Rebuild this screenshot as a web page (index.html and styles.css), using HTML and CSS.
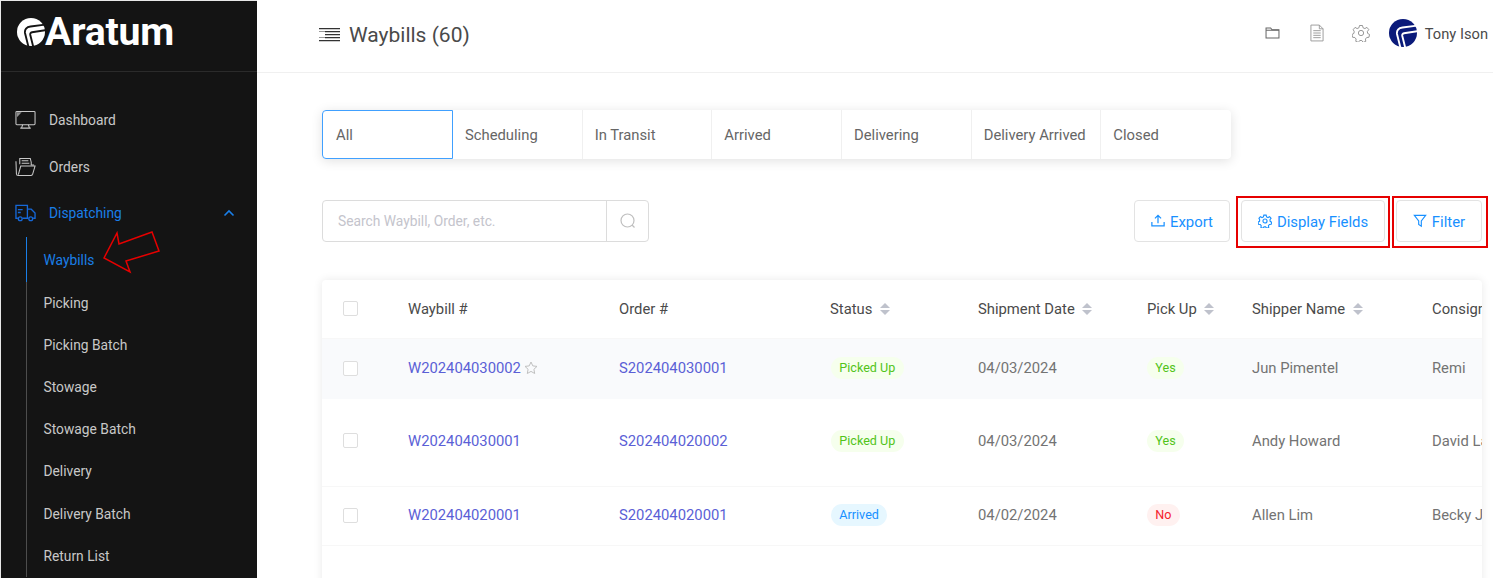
FILE: index.html
```html
<!DOCTYPE html>
<html lang="en">

<head>
    <meta charset="UTF-8">
    <meta name="viewport" content="width=device-width, initial-scale=1.0">
    <link rel="stylesheet" href="styles.css">
    <title>Waybills</title>
</head>

<body>
    <div class="app">
        <aside class="sidebar">
            <div class="brand">
                <svg class="brand-mark" viewBox="0 0 28 28">
                    <circle cx="14" cy="14" r="14" fill="#fff"/>
                    <g fill="none" stroke="#141414" stroke-width="1.900">
                        <path d="M29 6.500L13.500 8.500C9.500 9 7.500 11.500 8 15l3.500 14"/>
                        <path d="M29 12l-14 2.300c-1.500.3-2 1.200-1.700 2.700l3 12"/>
                    </g>
                </svg>
                <span class="brand-name">Aratum</span>
            </div>
            <nav class="nav">
                <a class="nav-item">
                    <svg class="nav-icon" viewBox="0 0 22 20" fill="none" stroke="#c8c8c8" stroke-width="1.100">
                        <rect x="1" y="1" width="20" height="14" rx="1"/>
                        <path d="M8 15l-1 3M14 15l1 3M5.500 18.500h11"/>
                        <path fill="#8c8c8c" stroke="none" d="M2 2h5l-5 5z"/>
                    </svg>
                    <span>Dashboard</span>
                </a>
                <a class="nav-item">
                    <svg class="nav-icon" viewBox="0 0 22 20" fill="none" stroke="#c8c8c8" stroke-width="1.100">
                        <path d="M5 7V1h11l1 4v3h3"/>
                        <path d="M7 3.500h7M7 6h8"/>
                        <path d="M1 4l.5 13c0 1 .7 2 2 2h13c1 0 1.500-.5 2-1.500L21 9H6l-2.500 9"/>
                    </svg>
                    <span>Orders</span>
                </a>
                <a class="nav-item nav-open">
                    <svg class="nav-icon" viewBox="0 0 22 20" fill="none" stroke="#1668d8" stroke-width="1.400">
                        <path d="M3 15.500H1V2h12v13.500H8"/>
                        <path d="M13 6h4l4 4v5.500h-2M13 15.500h1"/>
                        <path d="M3 6.500h5M3 9.500h3"/>
                        <circle cx="5.500" cy="16" r="2"/>
                        <circle cx="16.500" cy="16" r="2"/>
                    </svg>
                    <span>Dispatching</span>
                    <svg class="nav-caret" viewBox="0 0 12 8" fill="none" stroke="#1a7fe8" stroke-width="1.600">
                        <path d="M1.500 6.500L6 2l4.500 4.500"/>
                    </svg>
                </a>
                <div class="subnav">
                    <a class="sub-item sub-active">Waybills</a>
                    <a class="sub-item">Picking</a>
                    <a class="sub-item">Picking Batch</a>
                    <a class="sub-item">Stowage</a>
                    <a class="sub-item">Stowage Batch</a>
                    <a class="sub-item">Delivery</a>
                    <a class="sub-item">Delivery Batch</a>
                    <a class="sub-item">Return List</a>
                </div>
            </nav>
        </aside>

        <div class="main">
            <header class="header">
                <div class="title">
                    <svg class="title-icon" viewBox="0 0 21 14" fill="#333">
                        <path d="M0 0h21v1.300H0zM6 3h15v1.300H6zM6 6h15v1.300H6zM6 9h15v1.300H6zM0 12h21v1.300H0z"/>
                        <path d="M0 3h21v.4H0zM0 9.500h21v.4H0z"/>
                    </svg>
                    <h1>Waybills (60)</h1>
                </div>
                <div class="header-right">
                    <svg class="head-icon icon-folder" viewBox="0 0 16 13" fill="none" stroke="#666" stroke-width="1.100">
                        <path d="M1 12V1h5l1.500 2H15v9z"/>
                        <path d="M1 3.500h14"/>
                    </svg>
                    <svg class="head-icon icon-doc" viewBox="0 0 15 19" fill="none" stroke="#999" stroke-width="1">
                        <path d="M1 1h9l4 4v13H1z"/>
                        <path d="M10 1v4h4M3.500 7h8M3.500 9.500h8M3.500 12h8M3.500 14.500h8"/>
                    </svg>
                    <svg class="head-icon icon-gear" viewBox="0 0 24 24" fill="none" stroke="#8c8c8c" stroke-width="1.200">
                        <circle cx="12" cy="12" r="3.500"/>
                        <path d="M10 2h4l.7 3 2.500 1.100 2.700-1.600 2.500 3-1.900 2.400.3 2.600 2.600 1.500-.8 3.700-3 .3-1.700 2.100.5 3-3.500 1.400-1.800-2.500h-2.800l-1.800 2.500-3.500-1.400.5-3-1.700-2.100-3-.3-.8-3.700 2.600-1.500.3-2.600L1.600 7.500l2.500-3 2.700 1.600L9.300 5z"/>
                    </svg>
                    <svg class="avatar" viewBox="0 0 28 28">
                        <circle cx="14" cy="14" r="14" fill="#0a1a7a"/>
                        <g fill="none" stroke="#fff" stroke-width="1.900">
                            <path d="M29 6.500L13.500 8.500C9.500 9 7.500 11.500 8 15l3.500 14"/>
                            <path d="M29 12l-14 2.300c-1.500.3-2 1.200-1.700 2.700l3 12"/>
                        </g>
                    </svg>
                    <span class="user-name">Tony Ison</span>
                </div>
            </header>

            <div class="content">
                <div class="tabs">
                    <div class="tab tab-active">All</div>
                    <div class="tab">Scheduling</div>
                    <div class="tab">In Transit</div>
                    <div class="tab">Arrived</div>
                    <div class="tab">Delivering</div>
                    <div class="tab">Delivery Arrived</div>
                    <div class="tab">Closed</div>
                </div>

                <div class="toolbar">
                    <div class="search">
                        <span class="search-text">Search Waybill, Order, etc.</span>
                        <span class="search-btn">
                            <svg class="search-icon" viewBox="0 0 16 16" fill="none" stroke="#bfbfbf" stroke-width="1.200">
                                <circle cx="7.500" cy="7.500" r="6.500"/>
                                <path d="M12 12l2.500 2.500"/>
                            </svg>
                        </span>
                    </div>
                    <div class="actions">
                        <button class="btn btn-export">
                            <svg class="btn-icon" viewBox="0 0 16 16" fill="none" stroke="#1890ff" stroke-width="1.400">
                                <path d="M8 10.500V2M4.500 5L8 1.500 11.500 5M1 9v4.500h14V9"/>
                            </svg>
                            Export
                        </button>
                        <button class="btn btn-fields">
                            <svg class="btn-icon" viewBox="0 0 24 24" fill="none" stroke="#1890ff" stroke-width="1.900">
                                <circle cx="12" cy="12" r="3.500"/>
                                <path d="M10 2h4l.7 3 2.500 1.100 2.700-1.600 2.500 3-1.900 2.400.3 2.600 2.600 1.500-.8 3.700-3 .3-1.700 2.100.5 3-3.500 1.400-1.800-2.500h-2.800l-1.800 2.500-3.500-1.400.5-3-1.700-2.100-3-.3-.8-3.700 2.600-1.500.3-2.600L1.600 7.500l2.500-3 2.700 1.600L9.300 5z"/>
                            </svg>
                            Display Fields
                        </button>
                        <button class="btn btn-filter">
                            <svg class="btn-icon" viewBox="0 0 16 16" fill="none" stroke="#1890ff" stroke-width="1.300">
                                <path d="M1.500 1.500h13L9.500 8v6l-3-2V8z"/>
                            </svg>
                            Filter
                        </button>
                    </div>
                </div>

                <div class="card">
                    <table class="grid">
                        <colgroup>
                            <col class="col-check">
                            <col class="col-waybill">
                            <col class="col-order">
                            <col class="col-status">
                            <col class="col-date">
                            <col class="col-pick">
                            <col class="col-shipper">
                            <col class="col-consignee">
                        </colgroup>
                        <thead>
                            <tr class="row-head">
                                <th><span class="check"></span></th>
                                <th>Waybill #</th>
                                <th>Order #</th>
                                <th>Status<span class="sort"></span></th>
                                <th>Shipment Date<span class="sort"></span></th>
                                <th>Pick Up<span class="sort"></span></th>
                                <th>Shipper Name<span class="sort"></span></th>
                                <th>Consignee Name<span class="sort"></span></th>
                            </tr>
                        </thead>
                        <tbody>
                            <tr class="row-one">
                                <td><span class="check"></span></td>
                                <td><a class="link">W202404030002</a><svg class="star" viewBox="0 0 14 14" fill="none" stroke="#bfbfbf" stroke-width="1"><path d="M7 1l1.800 3.900 4.200.5-3.100 2.900.8 4.200L7 10.400l-3.700 2.100.8-4.200L1 5.400l4.200-.5z"/></svg></td>
                                <td><a class="link">S202404030001</a></td>
                                <td><span class="tag tag-green">Picked Up</span></td>
                                <td>04/03/2024</td>
                                <td><span class="tag tag-green">Yes</span></td>
                                <td>Jun Pimentel</td>
                                <td>Remi</td>
                            </tr>
                            <tr class="row-two">
                                <td><span class="check"></span></td>
                                <td><a class="link">W202404030001</a></td>
                                <td><a class="link">S202404020002</a></td>
                                <td><span class="tag tag-green">Picked Up</span></td>
                                <td>04/03/2024</td>
                                <td><span class="tag tag-green">Yes</span></td>
                                <td>Andy Howard</td>
                                <td>David Lang</td>
                            </tr>
                            <tr class="row-three">
                                <td><span class="check"></span></td>
                                <td><a class="link">W202404020001</a></td>
                                <td><a class="link">S202404020001</a></td>
                                <td><span class="tag tag-blue">Arrived</span></td>
                                <td>04/02/2024</td>
                                <td><span class="tag tag-red">No</span></td>
                                <td>Allen Lim</td>
                                <td>Becky Jones</td>
                            </tr>
                        </tbody>
                    </table>
                </div>
            </div>
        </div>
    </div>

    <!-- red markup drawn over the screenshot -->
    <svg class="markup" viewBox="0 0 1493 578" fill="none" stroke="#e60000">
        <rect x="1237" y="197" width="152" height="50" stroke-width="2"/>
        <rect x="1393" y="197" width="94" height="50" stroke-width="2"/>
        <path stroke-width="1.500" d="M104 258L117 233l2 11 33-12 7 19-33 10 4 11z"/>
    </svg>
</body>

</html>
```

FILE: styles.css
```css
* {
    margin: 0;
    padding: 0;
    box-sizing: border-box;
}

html,
body {
    height: 100%;
    overflow: hidden;
}

body {
    position: relative;
    background: white;
    font-family: Roboto, sans-serif;
    color: #737373;
}

.app {
    display: flex;
    height: 578px;
}

/* sidebar */
.sidebar {
    width: 257px;
    flex-shrink: 0;
    background: #141414;
    border-top: 1px solid #e8e8e8;
    border-left: 1px solid #e8e8e8;
    color: #c8c8c8;
    overflow: hidden;
}

.brand {
    display: flex;
    align-items: center;
    height: 71px;
    padding: 0 0 9px 16px;
    border-bottom: 1px solid #2b2b2b;
}

.brand-mark {
    width: 28px;
    height: 28px;
    flex-shrink: 0;
}

.brand-name {
    font-size: 39.200px;
    font-weight: 700;
    color: white;
    letter-spacing: -0.2px;
}

.nav {
    padding-top: 25px;
    font-size: 13.800px;
}

.nav-item {
    display: flex;
    align-items: center;
    height: 46.500px;
    padding-left: 14px;
}

.nav-icon {
    width: 21px;
    height: 20px;
    margin-right: 13px;
}

.nav-open {
    color: #1a7fe8;
}

.nav-caret {
    width: 12px;
    height: 8px;
    margin-left: auto;
    margin-right: 22px;
}

.subnav {
    margin-left: 25px;
    padding-top: 4px;
    border-left: 1px solid #4d4d4d;
}

.sub-item {
    display: flex;
    align-items: center;
    height: 42.200px;
    padding-left: 16.500px;
    margin-left: -1px;
    border-left: 1px solid transparent;
}

.sub-active {
    height: 45px;
    margin-top: -4px;
    padding-top: 2px;
    color: #1a7fe8;
    border-left-color: #1a7fe8;
}

/* header */
.main {
    flex: 1;
    min-width: 0;
}

.header {
    display: flex;
    align-items: center;
    justify-content: space-between;
    height: 73px;
    padding: 0 5px 6px 62px;
    border-bottom: 1px solid #f0f0f0;
}

.title {
    display: flex;
    align-items: center;
    margin-top: 4px;
}

.title-icon {
    width: 21px;
    height: 14px;
    margin-right: 9px;
}

.title h1 {
    font-size: 21px;
    font-weight: 400;
    color: #4a4a4a;
}

.header-right {
    display: flex;
    align-items: center;
}

.head-icon {
    flex-shrink: 0;
}

.icon-folder {
    width: 15px;
    height: 12px;
    margin-right: 30px;
}

.icon-doc {
    width: 14px;
    height: 18px;
    margin-right: 28px;
}

.icon-gear {
    width: 18px;
    height: 18px;
    margin-right: 19px;
}

.avatar {
    width: 28px;
    height: 28px;
    margin-right: 8px;
}

.user-name {
    margin-top: 2px;
    font-size: 14.700px;
    color: #4a4a4a;
}

/* tabs */
.content {
    padding: 37px 11px 0 65px;
}

.tabs {
    display: flex;
    width: 909px;
    height: 49px;
    background: white;
    border-radius: 4px;
    box-shadow: 0 2px 12px rgba(0, 0, 0, 0.12);
}

.tab {
    width: 129.700px;
    display: flex;
    align-items: center;
    padding-left: 12px;
    border-right: 1px solid #f0f0f0;
    font-size: 14.800px;
    color: #666;
}

.tab:last-child {
    border-right: none;
}

.tab-active {
    width: 131px;
    border: 1px solid #40a0ff;
    border-radius: 4px 0 0 4px;
    padding-left: 13px;
}

/* search and buttons */
.toolbar {
    display: flex;
    align-items: center;
    justify-content: space-between;
    height: 42px;
    margin-top: 41px;
}

.search {
    display: flex;
    width: 327px;
    height: 42px;
    border: 1px solid #dcdcdc;
    border-radius: 4px;
}

.search-text {
    flex: 1;
    display: flex;
    align-items: center;
    padding-left: 15px;
    font-size: 13.800px;
    color: #c4c4cc;
}

.search-btn {
    display: flex;
    align-items: center;
    justify-content: center;
    width: 42px;
    border-left: 1px solid #dcdcdc;
}

.search-icon {
    width: 16px;
    height: 16px;
}

.actions {
    display: flex;
    gap: 11px;
}

.btn {
    display: flex;
    align-items: center;
    justify-content: center;
    gap: 5px;
    height: 42px;
    padding-top: 2px;
    background: white;
    border: 1px solid #e3e3e3;
    border-radius: 4px;
    font-family: Roboto, sans-serif;
    font-size: 14.900px;
    color: #1890ff;
}

.btn-export {
    width: 96px;
}

.btn-fields {
    width: 144px;
}

.btn-filter {
    width: 86px;
}

.btn-icon {
    width: 14px;
    height: 14px;
    margin-bottom: 3px;
}

/* table */
.card {
    width: 1160px;
    height: 400px;
    margin-top: 38px;
    background: white;
    border-radius: 4px;
    box-shadow: 0 0 10px rgba(0, 0, 0, 0.09);
    overflow: hidden;
}

.grid {
    width: 1400px;
    table-layout: fixed;
    border-collapse: collapse;
    font-size: 14.800px;
}

.col-check {
    width: 86px;
}

.col-waybill,
.col-order {
    width: 211px;
}

.col-status {
    width: 148px;
}

.col-date {
    width: 169px;
}

.col-pick {
    width: 105px;
}

.col-shipper {
    width: 180px;
}

th,
td {
    text-align: left;
    white-space: nowrap;
    border-bottom: 1px solid #f7f7f7;
}

td {
    padding-bottom: 1px;
}

th {
    font-weight: 400;
    color: #4a4a4a;
}

th:first-child,
td:first-child {
    padding-left: 21px;
}

.row-head {
    height: 58px;
}

.row-one {
    height: 61px;
    background: #f9fafc;
}

.row-one td {
    border-bottom: none;
}

.row-two {
    height: 87px;
}

.row-two td {
    padding-bottom: 3px;
}

.row-three {
    height: 59px;
}

.check {
    display: block;
    width: 15px;
    height: 15px;
    background: white;
    border: 1px solid #dedede;
    border-radius: 2px;
}

.link {
    color: #5b5fd6;
}

.star {
    width: 14px;
    height: 14px;
    margin-left: 3px;
    vertical-align: -2px;
}

.sort {
    display: inline-block;
    position: relative;
    width: 10px;
    height: 12px;
    margin-left: 7.500px;
    vertical-align: -1px;
}

.sort::before,
.sort::after {
    content: "";
    position: absolute;
    left: 0;
    border-left: 5px solid transparent;
    border-right: 5px solid transparent;
}

.sort::before {
    top: 0;
    border-bottom: 5px solid #bfc2cc;
}

.sort::after {
    bottom: 0;
    border-top: 5px solid #bfc2cc;
}

.tag {
    display: inline-block;
    height: 22px;
    padding: 0 8.300px;
    border-radius: 11px;
    font-size: 12.600px;
    line-height: 22px;
}

td:nth-child(4) .tag {
    margin-left: 1px;
}

.tag-green {
    background: #f6ffed;
    color: #52c41a;
}

.tag-blue {
    background: #e6f7ff;
    color: #1890ff;
}

.tag-red {
    background: #fff1f0;
    color: #f5222d;
}

/* annotation layer */
.markup {
    position: absolute;
    top: 0;
    left: 0;
    width: 1493px;
    height: 578px;
}
```
